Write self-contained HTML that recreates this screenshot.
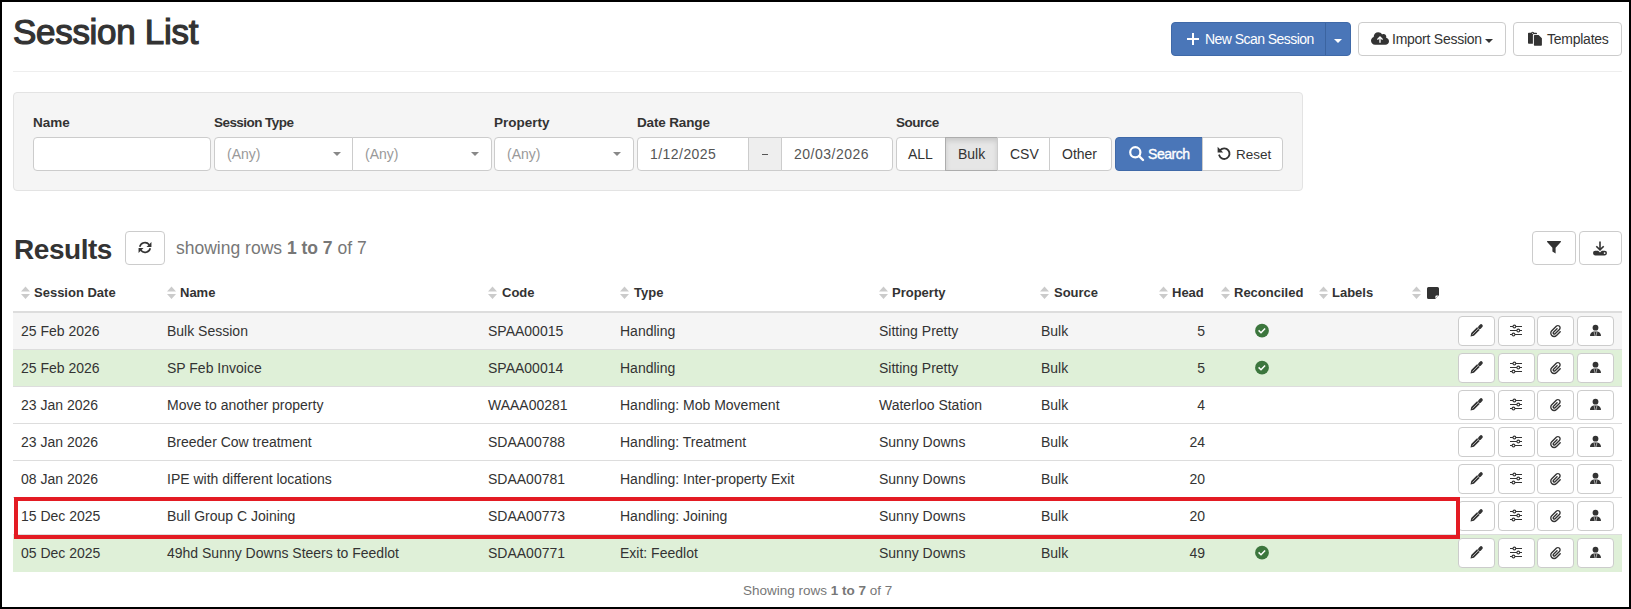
<!DOCTYPE html>
<html><head><meta charset="utf-8">
<style>
*{box-sizing:border-box;margin:0;padding:0}
html,body{width:1631px;height:609px;overflow:hidden;background:#fff}
body{position:relative;font-family:"Liberation Sans",sans-serif;color:#333;font-size:14px}
.a{position:absolute}
.frame{position:absolute;left:0;top:0;width:1631px;height:609px;border:2px solid #000;z-index:50}
.t{position:absolute;white-space:nowrap;line-height:20px}
.btn{position:absolute;border:1px solid #ccc;border-radius:4px;background:#fff}
.ctl{position:absolute;border:1px solid #ccc;background:#fff}
svg{position:absolute;display:block;overflow:visible}
.b{font-weight:bold}
.row{position:absolute;left:13px;width:1609px;height:37px;border-bottom:1px solid #ddd}
.row .t{line-height:36px;top:0}
.ab{position:absolute;top:3px;width:37px;height:30px;border:1px solid #ccc;border-radius:4px;background:#fff}
</style></head><body>
<div class="frame"></div>

<div class="t" style="left:13px;top:12.3px;font-size:35px;line-height:40px;letter-spacing:-0.3px;-webkit-text-stroke:1.2px #333">Session List</div>
<div class="a" style="left:13px;top:71px;width:1609px;height:1px;background:#eee"></div>
<div class="btn" style="left:1171px;top:22px;width:180px;height:34px;background:#4a76b8;border-color:#3f69a8"></div>
<div class="a" style="left:1325px;top:23px;width:1px;height:32px;background:#3b64a0"></div>
<svg style="left:1187px;top:33px" width="12" height="12" viewBox="0 0 12 12"><path d="M5 0h2v5h5v2H7v5H5V7H0V5h5z" fill="#fff"/></svg>
<div class="t" style="left:1205px;top:29px;color:#fff;font-size:14px;letter-spacing:-0.55px">New Scan Session</div>
<svg style="left:1334px;top:39px" width="8" height="4" viewBox="0 0 8 4"><path d="M0 0H8L4.0 4z" fill="#fff"/></svg>
<div class="btn" style="left:1358px;top:22px;width:148px;height:34px"></div>
<svg style="left:1371px;top:32px" width="18" height="13" viewBox="0 32 640 448"><path fill="#333" d="M144 480C64.5 480 0 415.5 0 336c0-62.8 40.2-116.2 96.2-135.9c-.1-2.7-.2-5.4-.2-8.1c0-88.4 71.6-160 160-160c59.3 0 111 32.2 138.7 80.2C409.9 102 428.3 96 448 96c53 0 96 43 96 96c0 12.2-2.3 23.8-6.4 34.6C596 238.4 640 290.1 640 352c0 70.7-57.3 128-128 128H144zm79-217c-9.4 9.4-9.4 24.6 0 33.9s24.6 9.4 33.9 0l39-39V392c0 13.3 10.7 24 24 24s24-10.7 24-24V257.9l39 39c9.4 9.4 24.6 9.4 33.9 0s9.4-24.6 0-33.9l-80-80c-9.4-9.4-24.6-9.4-33.9 0l-80 80z"/></svg>
<div class="t" style="left:1392px;top:29px;font-size:14px;letter-spacing:-0.25px">Import Session</div>
<svg style="left:1485px;top:39px" width="8" height="4" viewBox="0 0 8 4"><path d="M0 0H8L4.0 4z" fill="#333"/></svg>
<div class="btn" style="left:1513px;top:22px;width:109px;height:34px"></div>
<svg style="left:1528px;top:32px" width="14" height="14" viewBox="0 0 14 14"><path fill="#333" d="M0.8 0.8H8.2a0.8 0.8 0 0 1 0.8 0.8V2.4H0V1.6A0.8 0.8 0 0 1 0.8 0.8z"/><path fill="#333" d="M0 2H4.9V11.7H0.8A0.8 0.8 0 0 1 0 10.9z"/><circle cx="4.6" cy="1.3" r="1.5" fill="#333"/><circle cx="4.6" cy="1.3" r="0.55" fill="#fff"/><path fill="#fff" d="M5 2.3H11L14.8 6.1V14.6H5z"/><path fill="#333" d="M6.7 3H10.6L13.9 6.3V13A0.7 0.7 0 0 1 13.2 13.7H6.6A0.7 0.7 0 0 1 5.9 13V3.8A0.8 0.8 0 0 1 6.7 3z"/></svg>
<div class="t" style="left:1547px;top:29px;font-size:14px;letter-spacing:-0.25px">Templates</div>
<div class="a" style="left:13px;top:92px;width:1290px;height:99px;background:#f5f5f5;border:1px solid #e3e3e3;border-radius:4px"></div>
<div class="t b" style="left:33px;top:113.3px;font-size:13.5px;letter-spacing:0px">Name</div>
<div class="t b" style="left:214px;top:113.3px;font-size:13.5px;letter-spacing:-0.55px">Session Type</div>
<div class="t b" style="left:494px;top:113.3px;font-size:13.5px;letter-spacing:0px">Property</div>
<div class="t b" style="left:637px;top:113.3px;font-size:13.5px;letter-spacing:-0.15px">Date Range</div>
<div class="t b" style="left:896px;top:113.3px;font-size:13.5px;letter-spacing:-0.5px">Source</div>
<div class="ctl" style="left:33px;top:137px;width:178px;height:34px;border-radius:4px"></div>
<div class="ctl" style="left:214px;top:137px;width:139px;height:34px;border-radius:4px 0 0 4px"></div>
<div class="ctl" style="left:352px;top:137px;width:140px;height:34px;border-radius:0 4px 4px 0"></div>
<div class="ctl" style="left:494px;top:137px;width:140px;height:34px;border-radius:4px"></div>
<div class="t" style="left:227px;top:144px;color:#999">(Any)</div>
<div class="t" style="left:365px;top:144px;color:#999">(Any)</div>
<div class="t" style="left:507px;top:144px;color:#999">(Any)</div>
<svg style="left:333px;top:152px" width="8" height="4" viewBox="0 0 8 4"><path d="M0 0H8L4.0 4z" fill="#888"/></svg>
<svg style="left:471px;top:152px" width="8" height="4" viewBox="0 0 8 4"><path d="M0 0H8L4.0 4z" fill="#888"/></svg>
<svg style="left:613px;top:152px" width="8" height="4" viewBox="0 0 8 4"><path d="M0 0H8L4.0 4z" fill="#888"/></svg>
<div class="ctl" style="left:637px;top:137px;width:112px;height:34px;border-radius:4px 0 0 4px"></div>
<div class="ctl" style="left:748px;top:137px;width:34px;height:34px;background:#eee"></div>
<div class="ctl" style="left:781px;top:137px;width:112px;height:34px;border-radius:0 4px 4px 0"></div>
<div class="t" style="left:650px;top:144px;color:#555;letter-spacing:0.45px">1/12/2025</div>
<div class="a" style="left:762px;top:154px;width:6px;height:1px;background:#555"></div>
<div class="t" style="left:794px;top:144px;color:#555;letter-spacing:0.5px">20/03/2026</div>
<div class="ctl" style="left:896px;top:137px;width:50px;height:34px;border-radius:4px 0 0 4px"></div>
<div class="ctl" style="left:945px;top:137px;width:53px;height:34px;background:#e6e6e6;border-color:#adadad;box-shadow:inset 0 3px 5px rgba(0,0,0,.125)"></div>
<div class="ctl" style="left:997px;top:137px;width:53px;height:34px"></div>
<div class="ctl" style="left:1049px;top:137px;width:63px;height:34px;border-radius:0 4px 4px 0"></div>
<div class="t" style="left:908px;top:144px">ALL</div>
<div class="t" style="left:958px;top:144px">Bulk</div>
<div class="t" style="left:1010px;top:144px">CSV</div>
<div class="t" style="left:1062px;top:144px">Other</div>
<div class="ctl" style="left:1115px;top:137px;width:88px;height:34px;border-radius:4px 0 0 4px;background:#4a76b8;border-color:#3f69a8"></div>
<div class="ctl" style="left:1202px;top:137px;width:81px;height:34px;border-radius:0 4px 4px 0"></div>
<svg style="left:1129px;top:146px" width="15" height="15" viewBox="0 0 15 15"><circle cx="6.3" cy="6.3" r="5.1" stroke="#fff" stroke-width="2.2" fill="none"/><path d="M10 10l4 4" stroke="#fff" stroke-width="2.4" stroke-linecap="round"/></svg>
<div class="t" style="left:1148px;top:144px;color:#fff;font-size:14px;letter-spacing:-0.45px;-webkit-text-stroke:0.35px #fff">Search</div>
<svg style="left:1217px;top:146px" width="13" height="13" viewBox="0 0 13 13"><path d="M3.2 4.2A5.3 5.3 0 1 1 2.2 9.3" stroke="#333" stroke-width="1.9" fill="none" stroke-linecap="round"/><path d="M0.6 0.8V6.4H6.2z" fill="#333"/></svg>
<div class="t" style="left:1236px;top:144.5px;font-size:13.5px">Reset</div>
<div class="t b" style="left:14px;top:229.5px;font-size:28px;line-height:40px;letter-spacing:-0.45px">Results</div>
<div class="btn" style="left:125px;top:231px;width:40px;height:34px"></div>
<svg style="left:137.5px;top:241.3px" width="14" height="13" viewBox="0 0 13 12"><path d="M1.6 5.3A5 5 0 0 1 10.4 3.4" stroke="#333" stroke-width="1.5" fill="none"/><path d="M12.5 1V5.6H7.9z" fill="#333"/><path d="M11.4 6.7A5 5 0 0 1 2.6 8.6" stroke="#333" stroke-width="1.5" fill="none"/><path d="M0.5 11V6.4H5.1z" fill="#333"/></svg>
<div class="t" style="left:176px;top:235.5px;font-size:17.5px;line-height:24px;color:#777">showing rows <b>1 to 7</b> of 7</div>
<div class="btn" style="left:1532px;top:231px;width:44px;height:34px"></div>
<svg style="left:1547px;top:241px" width="14" height="13" viewBox="0 0 14 13"><path d="M0.6 0h12.8a0.6 0.6 0 0 1 .45 1L8.6 6.8V12.6L5.4 10.6V6.8L0.15 1A0.6 0.6 0 0 1 0.6 0z" fill="#333"/></svg>
<div class="btn" style="left:1579px;top:231px;width:43px;height:34px"></div>
<svg style="left:1593px;top:241px" width="14" height="15" viewBox="0 0 14 15"><path d="M7 0.5V8.5" stroke="#333" stroke-width="1.6"/><path d="M3.3 5.2L7 8.9L10.7 5.2" stroke="#333" stroke-width="1.6" fill="none" stroke-linejoin="miter"/><path d="M2.3 9.8H5.2L7 11.4L8.8 9.8H11.7A2.3 2.3 0 0 1 11.7 14.4H2.3A2.3 2.3 0 0 1 2.3 9.8z" fill="#333"/><circle cx="11.6" cy="12.1" r="0.9" fill="#fff"/></svg>
<div class="a" style="left:13px;top:311px;width:1609px;height:2px;background:#ddd"></div>
<svg style="left:21px;top:286px" width="9" height="13" viewBox="0 0 9 13"><path d="M4.5 0.4L9 5.6H0z M0 7.9h9L4.5 13z" fill="#cbcbcb"/></svg>
<div class="t b" style="left:34px;top:283px;font-size:13px">Session Date</div>
<svg style="left:167px;top:286px" width="9" height="13" viewBox="0 0 9 13"><path d="M4.5 0.4L9 5.6H0z M0 7.9h9L4.5 13z" fill="#cbcbcb"/></svg>
<div class="t b" style="left:180px;top:283px;font-size:13px">Name</div>
<svg style="left:488px;top:286px" width="9" height="13" viewBox="0 0 9 13"><path d="M4.5 0.4L9 5.6H0z M0 7.9h9L4.5 13z" fill="#cbcbcb"/></svg>
<div class="t b" style="left:502px;top:283px;font-size:13px">Code</div>
<svg style="left:620px;top:286px" width="9" height="13" viewBox="0 0 9 13"><path d="M4.5 0.4L9 5.6H0z M0 7.9h9L4.5 13z" fill="#cbcbcb"/></svg>
<div class="t b" style="left:634px;top:283px;font-size:13px">Type</div>
<svg style="left:879px;top:286px" width="9" height="13" viewBox="0 0 9 13"><path d="M4.5 0.4L9 5.6H0z M0 7.9h9L4.5 13z" fill="#cbcbcb"/></svg>
<div class="t b" style="left:892px;top:283px;font-size:13px">Property</div>
<svg style="left:1040px;top:286px" width="9" height="13" viewBox="0 0 9 13"><path d="M4.5 0.4L9 5.6H0z M0 7.9h9L4.5 13z" fill="#cbcbcb"/></svg>
<div class="t b" style="left:1054px;top:283px;font-size:13px">Source</div>
<svg style="left:1159px;top:286px" width="9" height="13" viewBox="0 0 9 13"><path d="M4.5 0.4L9 5.6H0z M0 7.9h9L4.5 13z" fill="#cbcbcb"/></svg>
<div class="t b" style="left:1172px;top:283px;font-size:13px">Head</div>
<svg style="left:1221px;top:286px" width="9" height="13" viewBox="0 0 9 13"><path d="M4.5 0.4L9 5.6H0z M0 7.9h9L4.5 13z" fill="#cbcbcb"/></svg>
<div class="t b" style="left:1234px;top:283px;font-size:13px">Reconciled</div>
<svg style="left:1319px;top:286px" width="9" height="13" viewBox="0 0 9 13"><path d="M4.5 0.4L9 5.6H0z M0 7.9h9L4.5 13z" fill="#cbcbcb"/></svg>
<div class="t b" style="left:1332px;top:283px;font-size:13px">Labels</div>
<svg style="left:1412px;top:286px" width="9" height="13" viewBox="0 0 9 13"><path d="M4.5 0.4L9 5.6H0z M0 7.9h9L4.5 13z" fill="#cbcbcb"/></svg>
<svg style="left:1427px;top:287px" width="12" height="12" viewBox="0 0 12 12"><path d="M1.5 0h9A1.5 1.5 0 0 1 12 1.5V8.2L8.2 12H1.5A1.5 1.5 0 0 1 0 10.5V1.5A1.5 1.5 0 0 1 1.5 0z" fill="#333"/><path d="M8.4 11.6V9.4a1 1 0 0 1 1-1h2.2z" fill="#fff"/></svg>
<div class="row" style="top:313px;background:#f5f5f5"><div class="t" style="left:8px">25 Feb 2026</div><div class="t" style="left:154px">Bulk Session</div><div class="t" style="left:475px">SPAA00015</div><div class="t" style="left:607px">Handling</div><div class="t" style="left:866px">Sitting Pretty</div><div class="t" style="left:1028px">Bulk</div><div class="t" style="right:417px">5</div><svg style="left:1242px;top:11px" width="14" height="14" viewBox="0 0 14 14"><circle cx="7" cy="6.7" r="6.9" fill="#3c763d"/><path d="M3.6 6.4L6 8.7L10.1 4.4" stroke="#fff" stroke-width="1.5" fill="none"/></svg><div class="ab" style="left:1445px"></div><svg style="left:1457px;top:11px" width="13" height="13" viewBox="0 0 13 13"><path d="M7.26 3.06L9.94 5.74L3.94 11.74L0.5 12.5L1.26 9.06Z" fill="#333"/><path d="M9.8 3.2L11.1 1.9" stroke="#333" stroke-width="3.4" stroke-linecap="round"/><path d="M7.0 3.3L9.7 6.0" stroke="#fff" stroke-width="0.55"/><path d="M7.9 5.1L2.4 10.6" stroke="#fff" stroke-width="0.6"/></svg><div class="ab" style="left:1485px"></div><svg style="left:1497px;top:12px" width="12" height="12" viewBox="0 0 12 12"><path d="M0 1.5h12M0 5.5h12M0 9.5h12" stroke="#333" stroke-width="1.1"/><circle cx="4.4" cy="1.5" r="1.4" fill="#fff" stroke="#333" stroke-width="1.1"/><circle cx="8.3" cy="5.5" r="1.4" fill="#fff" stroke="#333" stroke-width="1.1"/><circle cx="3.5" cy="9.5" r="1.4" fill="#fff" stroke="#333" stroke-width="1.1"/></svg><div class="ab" style="left:1524px"></div><svg style="left:1537px;top:12px" width="11" height="12" viewBox="0 32 448 448"><path fill="#333" d="M364.2 83.8c-24.4-24.4-64-24.4-88.4 0l-184 184c-42.1 42.1-42.1 110.3 0 152.4s110.3 42.1 152.4 0l152-152c10.9-10.9 28.7-10.9 39.6 0s10.9 28.7 0 39.6l-152 152c-64 64-167.6 64-231.6 0s-64-167.6 0-231.6l184-184c46.3-46.3 121.3-46.3 167.6 0s46.3 121.3 0 167.6l-176 176c-28.6 28.6-75 28.6-103.6 0s-28.6-75 0-103.6l144-144c10.9-10.9 28.7-10.9 39.6 0s10.9 28.7 0 39.6l-144 144c-6.7 6.7-6.7 17.7 0 24.4s17.7 6.7 24.4 0l176-176c24.4-24.4 24.4-64 0-88.4z"/></svg><div class="ab" style="left:1564px"></div><svg style="left:1577px;top:11px" width="11" height="12.4" viewBox="0 0 11 12.4"><circle cx="5.5" cy="3.7" r="2.9" fill="#333"/><path d="M0 12.1C0 9.7 1.5 7.9 3.6 7.6H7.4C9.5 7.9 11 9.7 11 12.1Z" fill="#333"/><path d="M4.1 7.8L5 12.1M6.9 7.8L6 12.1" stroke="#fff" stroke-width="0.55"/></svg></div>
<div class="row" style="top:350px;background:#dff0d8"><div class="t" style="left:8px">25 Feb 2026</div><div class="t" style="left:154px">SP Feb Invoice</div><div class="t" style="left:475px">SPAA00014</div><div class="t" style="left:607px">Handling</div><div class="t" style="left:866px">Sitting Pretty</div><div class="t" style="left:1028px">Bulk</div><div class="t" style="right:417px">5</div><svg style="left:1242px;top:11px" width="14" height="14" viewBox="0 0 14 14"><circle cx="7" cy="6.7" r="6.9" fill="#3c763d"/><path d="M3.6 6.4L6 8.7L10.1 4.4" stroke="#fff" stroke-width="1.5" fill="none"/></svg><div class="ab" style="left:1445px"></div><svg style="left:1457px;top:11px" width="13" height="13" viewBox="0 0 13 13"><path d="M7.26 3.06L9.94 5.74L3.94 11.74L0.5 12.5L1.26 9.06Z" fill="#333"/><path d="M9.8 3.2L11.1 1.9" stroke="#333" stroke-width="3.4" stroke-linecap="round"/><path d="M7.0 3.3L9.7 6.0" stroke="#fff" stroke-width="0.55"/><path d="M7.9 5.1L2.4 10.6" stroke="#fff" stroke-width="0.6"/></svg><div class="ab" style="left:1485px"></div><svg style="left:1497px;top:12px" width="12" height="12" viewBox="0 0 12 12"><path d="M0 1.5h12M0 5.5h12M0 9.5h12" stroke="#333" stroke-width="1.1"/><circle cx="4.4" cy="1.5" r="1.4" fill="#fff" stroke="#333" stroke-width="1.1"/><circle cx="8.3" cy="5.5" r="1.4" fill="#fff" stroke="#333" stroke-width="1.1"/><circle cx="3.5" cy="9.5" r="1.4" fill="#fff" stroke="#333" stroke-width="1.1"/></svg><div class="ab" style="left:1524px"></div><svg style="left:1537px;top:12px" width="11" height="12" viewBox="0 32 448 448"><path fill="#333" d="M364.2 83.8c-24.4-24.4-64-24.4-88.4 0l-184 184c-42.1 42.1-42.1 110.3 0 152.4s110.3 42.1 152.4 0l152-152c10.9-10.9 28.7-10.9 39.6 0s10.9 28.7 0 39.6l-152 152c-64 64-167.6 64-231.6 0s-64-167.6 0-231.6l184-184c46.3-46.3 121.3-46.3 167.6 0s46.3 121.3 0 167.6l-176 176c-28.6 28.6-75 28.6-103.6 0s-28.6-75 0-103.6l144-144c10.9-10.9 28.7-10.9 39.6 0s10.9 28.7 0 39.6l-144 144c-6.7 6.7-6.7 17.7 0 24.4s17.7 6.7 24.4 0l176-176c24.4-24.4 24.4-64 0-88.4z"/></svg><div class="ab" style="left:1564px"></div><svg style="left:1577px;top:11px" width="11" height="12.4" viewBox="0 0 11 12.4"><circle cx="5.5" cy="3.7" r="2.9" fill="#333"/><path d="M0 12.1C0 9.7 1.5 7.9 3.6 7.6H7.4C9.5 7.9 11 9.7 11 12.1Z" fill="#333"/><path d="M4.1 7.8L5 12.1M6.9 7.8L6 12.1" stroke="#fff" stroke-width="0.55"/></svg></div>
<div class="row" style="top:387px;background:#fff"><div class="t" style="left:8px">23 Jan 2026</div><div class="t" style="left:154px">Move to another property</div><div class="t" style="left:475px">WAAA00281</div><div class="t" style="left:607px">Handling: Mob Movement</div><div class="t" style="left:866px">Waterloo Station</div><div class="t" style="left:1028px">Bulk</div><div class="t" style="right:417px">4</div><div class="ab" style="left:1445px"></div><svg style="left:1457px;top:11px" width="13" height="13" viewBox="0 0 13 13"><path d="M7.26 3.06L9.94 5.74L3.94 11.74L0.5 12.5L1.26 9.06Z" fill="#333"/><path d="M9.8 3.2L11.1 1.9" stroke="#333" stroke-width="3.4" stroke-linecap="round"/><path d="M7.0 3.3L9.7 6.0" stroke="#fff" stroke-width="0.55"/><path d="M7.9 5.1L2.4 10.6" stroke="#fff" stroke-width="0.6"/></svg><div class="ab" style="left:1485px"></div><svg style="left:1497px;top:12px" width="12" height="12" viewBox="0 0 12 12"><path d="M0 1.5h12M0 5.5h12M0 9.5h12" stroke="#333" stroke-width="1.1"/><circle cx="4.4" cy="1.5" r="1.4" fill="#fff" stroke="#333" stroke-width="1.1"/><circle cx="8.3" cy="5.5" r="1.4" fill="#fff" stroke="#333" stroke-width="1.1"/><circle cx="3.5" cy="9.5" r="1.4" fill="#fff" stroke="#333" stroke-width="1.1"/></svg><div class="ab" style="left:1524px"></div><svg style="left:1537px;top:12px" width="11" height="12" viewBox="0 32 448 448"><path fill="#333" d="M364.2 83.8c-24.4-24.4-64-24.4-88.4 0l-184 184c-42.1 42.1-42.1 110.3 0 152.4s110.3 42.1 152.4 0l152-152c10.9-10.9 28.7-10.9 39.6 0s10.9 28.7 0 39.6l-152 152c-64 64-167.6 64-231.6 0s-64-167.6 0-231.6l184-184c46.3-46.3 121.3-46.3 167.6 0s46.3 121.3 0 167.6l-176 176c-28.6 28.6-75 28.6-103.6 0s-28.6-75 0-103.6l144-144c10.9-10.9 28.7-10.9 39.6 0s10.9 28.7 0 39.6l-144 144c-6.7 6.7-6.7 17.7 0 24.4s17.7 6.7 24.4 0l176-176c24.4-24.4 24.4-64 0-88.4z"/></svg><div class="ab" style="left:1564px"></div><svg style="left:1577px;top:11px" width="11" height="12.4" viewBox="0 0 11 12.4"><circle cx="5.5" cy="3.7" r="2.9" fill="#333"/><path d="M0 12.1C0 9.7 1.5 7.9 3.6 7.6H7.4C9.5 7.9 11 9.7 11 12.1Z" fill="#333"/><path d="M4.1 7.8L5 12.1M6.9 7.8L6 12.1" stroke="#fff" stroke-width="0.55"/></svg></div>
<div class="row" style="top:424px;background:#fff"><div class="t" style="left:8px">23 Jan 2026</div><div class="t" style="left:154px">Breeder Cow treatment</div><div class="t" style="left:475px">SDAA00788</div><div class="t" style="left:607px">Handling: Treatment</div><div class="t" style="left:866px">Sunny Downs</div><div class="t" style="left:1028px">Bulk</div><div class="t" style="right:417px">24</div><div class="ab" style="left:1445px"></div><svg style="left:1457px;top:11px" width="13" height="13" viewBox="0 0 13 13"><path d="M7.26 3.06L9.94 5.74L3.94 11.74L0.5 12.5L1.26 9.06Z" fill="#333"/><path d="M9.8 3.2L11.1 1.9" stroke="#333" stroke-width="3.4" stroke-linecap="round"/><path d="M7.0 3.3L9.7 6.0" stroke="#fff" stroke-width="0.55"/><path d="M7.9 5.1L2.4 10.6" stroke="#fff" stroke-width="0.6"/></svg><div class="ab" style="left:1485px"></div><svg style="left:1497px;top:12px" width="12" height="12" viewBox="0 0 12 12"><path d="M0 1.5h12M0 5.5h12M0 9.5h12" stroke="#333" stroke-width="1.1"/><circle cx="4.4" cy="1.5" r="1.4" fill="#fff" stroke="#333" stroke-width="1.1"/><circle cx="8.3" cy="5.5" r="1.4" fill="#fff" stroke="#333" stroke-width="1.1"/><circle cx="3.5" cy="9.5" r="1.4" fill="#fff" stroke="#333" stroke-width="1.1"/></svg><div class="ab" style="left:1524px"></div><svg style="left:1537px;top:12px" width="11" height="12" viewBox="0 32 448 448"><path fill="#333" d="M364.2 83.8c-24.4-24.4-64-24.4-88.4 0l-184 184c-42.1 42.1-42.1 110.3 0 152.4s110.3 42.1 152.4 0l152-152c10.9-10.9 28.7-10.9 39.6 0s10.9 28.7 0 39.6l-152 152c-64 64-167.6 64-231.6 0s-64-167.6 0-231.6l184-184c46.3-46.3 121.3-46.3 167.6 0s46.3 121.3 0 167.6l-176 176c-28.6 28.6-75 28.6-103.6 0s-28.6-75 0-103.6l144-144c10.9-10.9 28.7-10.9 39.6 0s10.9 28.7 0 39.6l-144 144c-6.7 6.7-6.7 17.7 0 24.4s17.7 6.7 24.4 0l176-176c24.4-24.4 24.4-64 0-88.4z"/></svg><div class="ab" style="left:1564px"></div><svg style="left:1577px;top:11px" width="11" height="12.4" viewBox="0 0 11 12.4"><circle cx="5.5" cy="3.7" r="2.9" fill="#333"/><path d="M0 12.1C0 9.7 1.5 7.9 3.6 7.6H7.4C9.5 7.9 11 9.7 11 12.1Z" fill="#333"/><path d="M4.1 7.8L5 12.1M6.9 7.8L6 12.1" stroke="#fff" stroke-width="0.55"/></svg></div>
<div class="row" style="top:461px;background:#fff"><div class="t" style="left:8px">08 Jan 2026</div><div class="t" style="left:154px">IPE with different locations</div><div class="t" style="left:475px">SDAA00781</div><div class="t" style="left:607px">Handling: Inter-property Exit</div><div class="t" style="left:866px">Sunny Downs</div><div class="t" style="left:1028px">Bulk</div><div class="t" style="right:417px">20</div><div class="ab" style="left:1445px"></div><svg style="left:1457px;top:11px" width="13" height="13" viewBox="0 0 13 13"><path d="M7.26 3.06L9.94 5.74L3.94 11.74L0.5 12.5L1.26 9.06Z" fill="#333"/><path d="M9.8 3.2L11.1 1.9" stroke="#333" stroke-width="3.4" stroke-linecap="round"/><path d="M7.0 3.3L9.7 6.0" stroke="#fff" stroke-width="0.55"/><path d="M7.9 5.1L2.4 10.6" stroke="#fff" stroke-width="0.6"/></svg><div class="ab" style="left:1485px"></div><svg style="left:1497px;top:12px" width="12" height="12" viewBox="0 0 12 12"><path d="M0 1.5h12M0 5.5h12M0 9.5h12" stroke="#333" stroke-width="1.1"/><circle cx="4.4" cy="1.5" r="1.4" fill="#fff" stroke="#333" stroke-width="1.1"/><circle cx="8.3" cy="5.5" r="1.4" fill="#fff" stroke="#333" stroke-width="1.1"/><circle cx="3.5" cy="9.5" r="1.4" fill="#fff" stroke="#333" stroke-width="1.1"/></svg><div class="ab" style="left:1524px"></div><svg style="left:1537px;top:12px" width="11" height="12" viewBox="0 32 448 448"><path fill="#333" d="M364.2 83.8c-24.4-24.4-64-24.4-88.4 0l-184 184c-42.1 42.1-42.1 110.3 0 152.4s110.3 42.1 152.4 0l152-152c10.9-10.9 28.7-10.9 39.6 0s10.9 28.7 0 39.6l-152 152c-64 64-167.6 64-231.6 0s-64-167.6 0-231.6l184-184c46.3-46.3 121.3-46.3 167.6 0s46.3 121.3 0 167.6l-176 176c-28.6 28.6-75 28.6-103.6 0s-28.6-75 0-103.6l144-144c10.9-10.9 28.7-10.9 39.6 0s10.9 28.7 0 39.6l-144 144c-6.7 6.7-6.7 17.7 0 24.4s17.7 6.7 24.4 0l176-176c24.4-24.4 24.4-64 0-88.4z"/></svg><div class="ab" style="left:1564px"></div><svg style="left:1577px;top:11px" width="11" height="12.4" viewBox="0 0 11 12.4"><circle cx="5.5" cy="3.7" r="2.9" fill="#333"/><path d="M0 12.1C0 9.7 1.5 7.9 3.6 7.6H7.4C9.5 7.9 11 9.7 11 12.1Z" fill="#333"/><path d="M4.1 7.8L5 12.1M6.9 7.8L6 12.1" stroke="#fff" stroke-width="0.55"/></svg></div>
<div class="row" style="top:498px;background:#fff"><div class="t" style="left:8px">15 Dec 2025</div><div class="t" style="left:154px">Bull Group C Joining</div><div class="t" style="left:475px">SDAA00773</div><div class="t" style="left:607px">Handling: Joining</div><div class="t" style="left:866px">Sunny Downs</div><div class="t" style="left:1028px">Bulk</div><div class="t" style="right:417px">20</div><div class="ab" style="left:1445px"></div><svg style="left:1457px;top:11px" width="13" height="13" viewBox="0 0 13 13"><path d="M7.26 3.06L9.94 5.74L3.94 11.74L0.5 12.5L1.26 9.06Z" fill="#333"/><path d="M9.8 3.2L11.1 1.9" stroke="#333" stroke-width="3.4" stroke-linecap="round"/><path d="M7.0 3.3L9.7 6.0" stroke="#fff" stroke-width="0.55"/><path d="M7.9 5.1L2.4 10.6" stroke="#fff" stroke-width="0.6"/></svg><div class="ab" style="left:1485px"></div><svg style="left:1497px;top:12px" width="12" height="12" viewBox="0 0 12 12"><path d="M0 1.5h12M0 5.5h12M0 9.5h12" stroke="#333" stroke-width="1.1"/><circle cx="4.4" cy="1.5" r="1.4" fill="#fff" stroke="#333" stroke-width="1.1"/><circle cx="8.3" cy="5.5" r="1.4" fill="#fff" stroke="#333" stroke-width="1.1"/><circle cx="3.5" cy="9.5" r="1.4" fill="#fff" stroke="#333" stroke-width="1.1"/></svg><div class="ab" style="left:1524px"></div><svg style="left:1537px;top:12px" width="11" height="12" viewBox="0 32 448 448"><path fill="#333" d="M364.2 83.8c-24.4-24.4-64-24.4-88.4 0l-184 184c-42.1 42.1-42.1 110.3 0 152.4s110.3 42.1 152.4 0l152-152c10.9-10.9 28.7-10.9 39.6 0s10.9 28.7 0 39.6l-152 152c-64 64-167.6 64-231.6 0s-64-167.6 0-231.6l184-184c46.3-46.3 121.3-46.3 167.6 0s46.3 121.3 0 167.6l-176 176c-28.6 28.6-75 28.6-103.6 0s-28.6-75 0-103.6l144-144c10.9-10.9 28.7-10.9 39.6 0s10.9 28.7 0 39.6l-144 144c-6.7 6.7-6.7 17.7 0 24.4s17.7 6.7 24.4 0l176-176c24.4-24.4 24.4-64 0-88.4z"/></svg><div class="ab" style="left:1564px"></div><svg style="left:1577px;top:11px" width="11" height="12.4" viewBox="0 0 11 12.4"><circle cx="5.5" cy="3.7" r="2.9" fill="#333"/><path d="M0 12.1C0 9.7 1.5 7.9 3.6 7.6H7.4C9.5 7.9 11 9.7 11 12.1Z" fill="#333"/><path d="M4.1 7.8L5 12.1M6.9 7.8L6 12.1" stroke="#fff" stroke-width="0.55"/></svg></div>
<div class="row" style="top:535px;background:#dff0d8;border-bottom:0"><div class="t" style="left:8px">05 Dec 2025</div><div class="t" style="left:154px">49hd Sunny Downs Steers to Feedlot</div><div class="t" style="left:475px">SDAA00771</div><div class="t" style="left:607px">Exit: Feedlot</div><div class="t" style="left:866px">Sunny Downs</div><div class="t" style="left:1028px">Bulk</div><div class="t" style="right:417px">49</div><svg style="left:1242px;top:11px" width="14" height="14" viewBox="0 0 14 14"><circle cx="7" cy="6.7" r="6.9" fill="#3c763d"/><path d="M3.6 6.4L6 8.7L10.1 4.4" stroke="#fff" stroke-width="1.5" fill="none"/></svg><div class="ab" style="left:1445px"></div><svg style="left:1457px;top:11px" width="13" height="13" viewBox="0 0 13 13"><path d="M7.26 3.06L9.94 5.74L3.94 11.74L0.5 12.5L1.26 9.06Z" fill="#333"/><path d="M9.8 3.2L11.1 1.9" stroke="#333" stroke-width="3.4" stroke-linecap="round"/><path d="M7.0 3.3L9.7 6.0" stroke="#fff" stroke-width="0.55"/><path d="M7.9 5.1L2.4 10.6" stroke="#fff" stroke-width="0.6"/></svg><div class="ab" style="left:1485px"></div><svg style="left:1497px;top:12px" width="12" height="12" viewBox="0 0 12 12"><path d="M0 1.5h12M0 5.5h12M0 9.5h12" stroke="#333" stroke-width="1.1"/><circle cx="4.4" cy="1.5" r="1.4" fill="#fff" stroke="#333" stroke-width="1.1"/><circle cx="8.3" cy="5.5" r="1.4" fill="#fff" stroke="#333" stroke-width="1.1"/><circle cx="3.5" cy="9.5" r="1.4" fill="#fff" stroke="#333" stroke-width="1.1"/></svg><div class="ab" style="left:1524px"></div><svg style="left:1537px;top:12px" width="11" height="12" viewBox="0 32 448 448"><path fill="#333" d="M364.2 83.8c-24.4-24.4-64-24.4-88.4 0l-184 184c-42.1 42.1-42.1 110.3 0 152.4s110.3 42.1 152.4 0l152-152c10.9-10.9 28.7-10.9 39.6 0s10.9 28.7 0 39.6l-152 152c-64 64-167.6 64-231.6 0s-64-167.6 0-231.6l184-184c46.3-46.3 121.3-46.3 167.6 0s46.3 121.3 0 167.6l-176 176c-28.6 28.6-75 28.6-103.6 0s-28.6-75 0-103.6l144-144c10.9-10.9 28.7-10.9 39.6 0s10.9 28.7 0 39.6l-144 144c-6.7 6.7-6.7 17.7 0 24.4s17.7 6.7 24.4 0l176-176c24.4-24.4 24.4-64 0-88.4z"/></svg><div class="ab" style="left:1564px"></div><svg style="left:1577px;top:11px" width="11" height="12.4" viewBox="0 0 11 12.4"><circle cx="5.5" cy="3.7" r="2.9" fill="#333"/><path d="M0 12.1C0 9.7 1.5 7.9 3.6 7.6H7.4C9.5 7.9 11 9.7 11 12.1Z" fill="#333"/><path d="M4.1 7.8L5 12.1M6.9 7.8L6 12.1" stroke="#fff" stroke-width="0.55"/></svg></div>
<div class="t" style="left:743px;top:581px;color:#777;font-size:13.5px">Showing rows <b>1 to 7</b> of 7</div>
<div class="a" style="left:14px;top:497px;width:1446px;height:42px;border:4px solid #e31b23;z-index:20"></div>
</body></html>
